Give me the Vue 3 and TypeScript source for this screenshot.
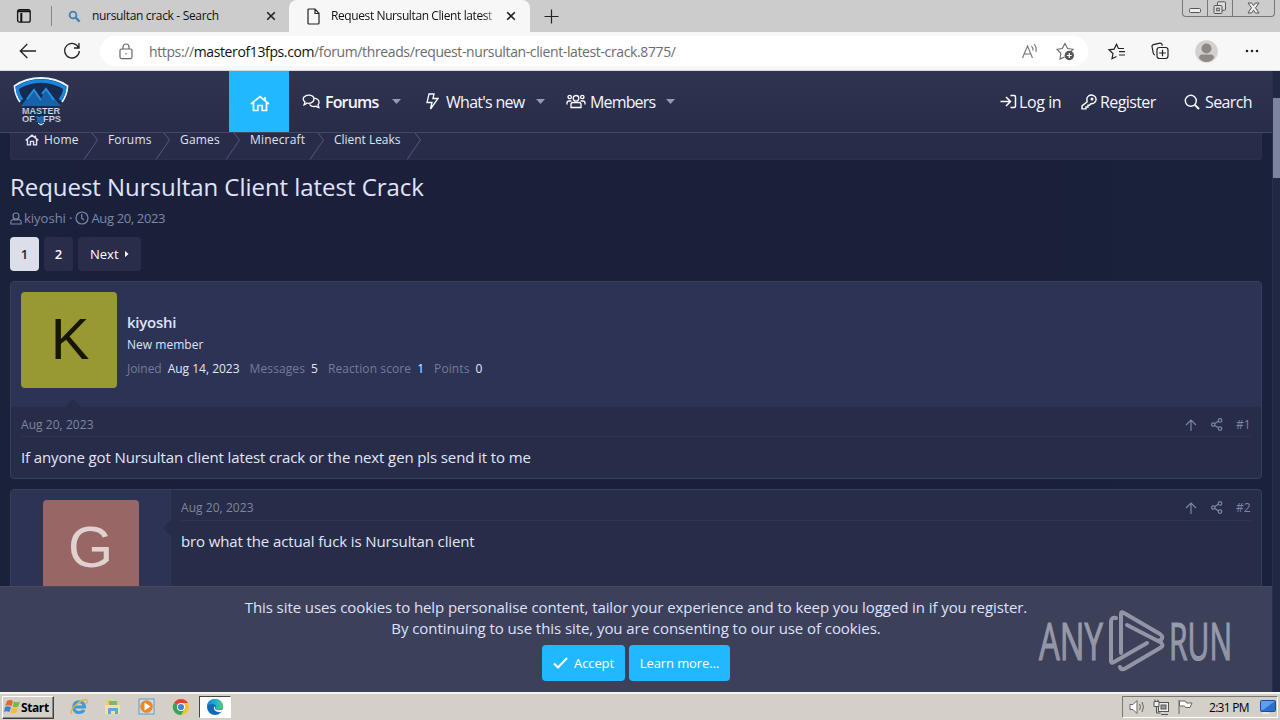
<script setup lang="ts">
interface Stat { label: string; value: string }
const crumbs: string[] = ['Home', 'Forums', 'Games', 'Minecraft', 'Client Leaks']
const stats: Stat[] = [
  { label: 'Joined', value: 'Aug 14, 2023' },
  { label: 'Messages', value: '5' },
  { label: 'Reaction score', value: '1' },
  { label: 'Points', value: '0' },
]
</script>

<template>
  <div class="screen">
    <header class="tabs">
      <div class="tab-menu">
        <svg width="16" height="16" viewBox="0 0 16 16" fill="none" stroke="#111" stroke-width="1.3"><rect x="1.6" y="1.6" width="12.6" height="12.6" rx="2" /><path d="M2 3.2h12M5.3 5v9" stroke-width="2" /></svg>
      </div>
      <div class="tab idle">
        <svg width="13" height="13" viewBox="0 0 13 13" fill="none" stroke="#3f7fbd"><circle cx="5" cy="5" r="3.4" stroke-width="1.8" /><path d="M7.6 7.6l4 4" stroke-width="2.3" /></svg>
        <span class="tab-text one">nursultan crack - Search</span>
        <svg class="close" width="10" height="10" viewBox="0 0 10 10" stroke="#222" stroke-width="1.6"><path d="M1.2 1.2l7.6 7.6M8.8 1.2L1.2 8.8" /></svg>
      </div>
      <div class="tab active">
        <svg width="13" height="17" viewBox="0 0 13 17" fill="none" stroke="#222" stroke-width="1.2"><path d="M2 1h6l4 4.3V15q0 1-1 1H2q-1 0-1-1V2q0-1 1-1zM8 1v4.5h4" /></svg>
        <span class="tab-text two">Request Nursultan Client latest</span>
        <svg class="close" width="10" height="10" viewBox="0 0 10 10" stroke="#222" stroke-width="1.6"><path d="M1.2 1.2l7.6 7.6M8.8 1.2L1.2 8.8" /></svg>
      </div>
      <svg class="plus" width="15" height="15" viewBox="0 0 15 15" stroke="#222" stroke-width="1.2"><path d="M7.5 .5v14M.5 7.5h14" /></svg>
      <div class="win-buttons">
        <span class="wb"><svg width="14" height="7" viewBox="0 0 14 7" fill="#eee" stroke="#555"><rect x="1.5" y="1.5" width="11" height="4" rx="1" /></svg></span>
        <span class="wb"><svg width="14" height="14" viewBox="0 0 14 14" fill="#ddd" stroke="#555"><rect x="4.5" y=".8" width="8" height="8.5" rx="1" /><rect x="1" y="4.5" width="8" height="8" rx="1" /><rect x="3.7" y="7.2" width="2.6" height="2.6" /></svg></span>
        <span class="wb wide"><svg width="13" height="12" viewBox="0 0 13 12" fill="#eee" stroke="#555"><path d="M1 1h3.600l1.900 2.600L8.400 1H12L8.500 5.800 12 11H8.400L6.500 8.200 4.600 11H1l3.500-5.200z" /></svg></span>
      </div>
    </header>

    <div class="toolbar">
      <svg class="back" width="18" height="16" viewBox="0 0 18 16" fill="none" stroke="#222" stroke-width="1.3"><path d="M17 8H1.500M8.300 1L1.300 8l7 7" /></svg>
      <svg class="reload" width="18" height="18" viewBox="0 0 18 18" fill="none" stroke="#222" stroke-width="1.3"><path d="M15.800 6A7.300 7.300 0 1 0 16.300 9M16 1v5h-5" /></svg>
      <div class="address">
        <svg class="lock" width="14" height="17" viewBox="0 0 14 17" fill="none" stroke="#666" stroke-width="1.2"><rect x="1" y="6" width="12" height="9.600" rx="1.500" /><path d="M4 6V4a3 3 0 0 1 6 0v2" /><circle cx="7" cy="10.800" r=".8" fill="#666" stroke="none" /></svg>
        <span class="url">https://<b>masterof13fps.com</b>/forum/threads/request-nursultan-client-latest-crack.8775/</span>
        <svg class="read" width="18" height="17" viewBox="0 0 18 17" fill="none" stroke="#777" stroke-width="1.15"><path d="M1.500 15L6.500 3l5 12M3.200 11h6.600M10.500 3.200q2 2 1.400 4.500M13 1.200q3.200 3 1.800 7.600" /></svg>
        <svg class="favadd" width="19" height="19" viewBox="0 0 19 19" fill="none" stroke="#666" stroke-width="1.1"><path d="M8.500 15L4 17l.8-5.700L1 7.300l5.300-.8L9 1.500l2.500 5 5.500.8-2.500 2.500" /><circle cx="13.300" cy="13.500" r="4.700" fill="#555" stroke="none" /><path d="M13.300 11v5M10.800 13.500h5" stroke="#fff" stroke-width="1.2" /></svg>
      </div>
      <svg class="favs" width="18" height="17" viewBox="0 0 18 17" fill="none" stroke="#222" stroke-width="1.2"><path d="M8.500 13.500L4 15.700l1-5.200L1 6.800l5.100-.7L8.500 1.300l2 4.200H16M11 8.700h6M11 12h6" /></svg>
      <svg class="collections" width="18" height="18" viewBox="0 0 18 18" fill="none" stroke="#222" stroke-width="1.2"><path d="M4 13Q2.500 12.500 2.200 11L1 4.500Q.8 3 2.300 2.600L9 1.200q1.500-.2 2 1.300l.4 1.300" /><rect x="6" y="5.500" width="11" height="11" rx="2.400" /><path d="M11.500 7.700v6.600M8.200 11h6.600" /></svg>
      <svg class="avatar-icon" width="23" height="23" viewBox="0 0 23 23"><circle cx="11.500" cy="11.500" r="11.300" fill="#d3d0cd" /><circle cx="11.500" cy="8.500" r="5" fill="#8e8984" /><path d="M4 18q0-3.500 3-3.500h9q3 0 3 3.500-3 4-7.500 4T4 18z" fill="#8e8984" /></svg>
      <svg class="more" width="14" height="4" viewBox="0 0 14 4" fill="#222"><circle cx="2" cy="2" r="1.300" /><circle cx="7" cy="2" r="1.300" /><circle cx="12" cy="2" r="1.300" /></svg>
    </div>

    <div class="viewport">
      <main class="site">
        <nav class="nav">
          <svg class="logo" width="56" height="50" viewBox="0 0 56 50">
            <path d="M28 1Q43 1 54.500 9 54 19 48 26L28 48 8 26Q2 19 1.500 9 13 1 28 1z" fill="#172a52" />
            <path d="M7 25Q2 18 1.500 9 13 1 28 1T54.500 9Q54 18 49 25" fill="none" stroke="#e8f4ff" stroke-width="1.800" />
            <path d="M9 23Q4.500 17 4.300 11 15 4 28 4t23.700 7Q51.500 17 47 23" fill="none" stroke="#1686df" stroke-width="3.300" />
            <path d="M8 29L21 12l7 10 5-11 7 9 8 9z" fill="#1763a8" /><path d="M14 22l7-9 7 10M29 17l4-5 8 11" fill="none" stroke="#268ee0" stroke-width="2" />
            <path d="M23 40h10l-5 8z" fill="#1479c9" /><path d="M25 46l3 2 3-2" stroke="#fff" fill="none" />
            <text x="9" y="37" textLength="38" lengthAdjust="spacingAndGlyphs">MASTER</text>
            <text x="9" y="44.500" textLength="13" lengthAdjust="spacingAndGlyphs">OF</text><text x="30" y="44.500" textLength="18" lengthAdjust="spacingAndGlyphs">FPS</text>
            <text class="thirteen" x="22.500" y="44.500" textLength="8" lengthAdjust="spacingAndGlyphs">13</text>
          </svg>
          <a class="nav-home"><svg width="20" height="17" viewBox="0 0 20 17" fill="none" stroke="#fff" stroke-width="1.700"><path d="M1 9L10 1.500 19 9M3.500 7.500V15.500h4.300v-5h4.400v5h4.300V7.500M15 5V2" /></svg></a>
          <a class="nav-item forums"><svg width="18" height="15" viewBox="0 0 18 15" fill="none" stroke="#fff" stroke-width="1.300"><path d="M2 11l1-3Q0 5.500 2 3q2.500-2.500 6-1.800 4 .8 4 4Q11.500 9 7 9.300q-1.200 0-2-.3-1.500 1.500-3 2zM12.500 4.200Q17 5 17 8.500q0 1.500-1 2.500l1 2.700q-2-.2-3-1.500-4 1.500-6.500-1.800" /></svg><span>Forums</span><i class="caret" /></a>
          <a class="nav-item whats"><svg width="14" height="17" viewBox="0 0 14 17" fill="none" stroke="#fff" stroke-width="1.300"><path d="M4 1h5L8 5.500h5L5.500 16 7 9.500H2z" /></svg><span>What's new</span><i class="caret" /></a>
          <a class="nav-item members"><svg width="20" height="15" viewBox="0 0 20 15" fill="none" stroke="#fff" stroke-width="1.300"><circle cx="10" cy="4.300" r="2.800" /><circle cx="3.700" cy="3" r="1.700" /><circle cx="16.300" cy="3" r="1.700" /><path d="M5 13.500v-3Q5 8.500 7 8.500h6q2 0 2 2v3zM5.500 7H3Q1 7 1 9v1.500M14.500 7H17q2 0 2 2v1.500" /></svg><span>Members</span><i class="caret" /></a>
          <div class="nav-right">
            <a class="login"><svg width="17" height="15" viewBox="0 0 17 15" fill="none" stroke="#fff" stroke-width="1.500"><path d="M.5 7.500H10M6 3l4.500 4.500L6 12M10.500 1.500H14q1.500 0 1.500 1.500v9q0 1.500-1.500 1.500h-3.500" /></svg><span>Log in</span></a>
            <a class="register"><svg width="16" height="16" viewBox="0 0 16 16" fill="none" stroke="#fff" stroke-width="1.400"><path d="M6.200 7.700Q5 4 7.500 2 10 .200 13 1.800q2.800 2 1.800 5-1.200 3.200-5 3L8.500 11.300H7V13H5v1.900H1v-3z" /><circle cx="11" cy="5" r=".8" /></svg><span>Register</span></a>
            <a class="search"><svg width="16" height="16" viewBox="0 0 16 16" fill="none" stroke="#fff"><circle cx="6.800" cy="6.800" r="5.500" stroke-width="1.400" /><path d="M11 11l4 4" stroke-width="2" /></svg><span>Search</span></a>
          </div>
        </nav>

        <div class="crumbs">
          <div v-for="(c, i) in crumbs" :key="c" class="crumb" :class="'c' + i">
            <svg v-if="i === 0" class="mini-home" width="14" height="12" viewBox="0 0 20 17" fill="none" stroke="#e0e3f5" stroke-width="2"><path d="M1 9L10 1.500 19 9M3.500 7.500V15.500h4.300v-5h4.400v5h4.300V7.500M15 5V2" /></svg>
            <span>{{ c }}</span>
            <svg class="chevron" width="16" height="27" viewBox="0 0 16 27" fill="none" stroke="#53597a" stroke-width="1"><path d="M8 0l5.500 7L0 26.500" /></svg>
          </div>
        </div>

        <h1>Request Nursultan Client latest Crack</h1>
        <div class="meta">
          <svg width="12" height="13" viewBox="0 0 12 13" fill="none" stroke="currentColor" stroke-width="1.100"><circle cx="6" cy="4" r="3" /><path d="M3.300 7.200Q1 8 .8 10v2h10.400v-2Q11 8 8.700 7.200q-2.700 1.700-5.400 0z" /></svg>
          <span class="by">kiyoshi</span><span class="dot">·</span>
          <svg width="14" height="14" viewBox="0 0 14 14" fill="none" stroke="currentColor" stroke-width="1.200"><circle cx="7" cy="7" r="6" /><path d="M6.800 3v4.500l2.200 1.600" /></svg>
          <span class="on">Aug 20, 2023</span>
        </div>
        <div class="pages"><a class="page current">1</a><a class="page">2</a><a class="page next">Next<i /></a></div>

        <article class="post first">
          <div class="user">
            <div class="avatar k">K</div>
            <div class="user-info">
              <strong>kiyoshi</strong>
              <span class="role">New member</span>
              <div class="stats"><span v-for="s in stats" :key="s.label" class="stat"><span class="label">{{ s.label }}</span><span class="value">{{ s.value }}</span></span></div>
            </div>
            <i class="notch" />
          </div>
          <div class="content">
            <div class="post-head"><span>Aug 20, 2023</span>
              <svg class="up" width="12" height="12" viewBox="0 0 12 12" fill="none" stroke="currentColor" stroke-width="1.200"><path d="M6 12V1M1 6l5-5 5 5" /></svg>
              <svg class="share" width="12" height="13" viewBox="0 0 12 13" fill="none" stroke="currentColor" stroke-width="1.200"><circle cx="2.300" cy="6.500" r="1.700" /><circle cx="9" cy="2.400" r="1.800" /><circle cx="9" cy="10.600" r="1.800" /><path d="M3.800 5.500L7.400 3.300M3.800 7.500l3.600 2.200" /></svg>
              <span class="num">#1</span></div>
            <p class="message m1">If anyone got Nursultan client latest crack or the next gen pls send it to me</p>
          </div>
        </article>

        <article class="post second">
          <div class="user"><div class="avatar g">G</div><i class="notch" /></div>
          <div class="content">
            <div class="post-head"><span>Aug 20, 2023</span>
              <svg class="up" width="12" height="12" viewBox="0 0 12 12" fill="none" stroke="currentColor" stroke-width="1.200"><path d="M6 12V1M1 6l5-5 5 5" /></svg>
              <svg class="share" width="12" height="13" viewBox="0 0 12 13" fill="none" stroke="currentColor" stroke-width="1.200"><circle cx="2.300" cy="6.500" r="1.700" /><circle cx="9" cy="2.400" r="1.800" /><circle cx="9" cy="10.600" r="1.800" /><path d="M3.800 5.500L7.400 3.300M3.800 7.500l3.600 2.200" /></svg>
              <span class="num">#2</span></div>
            <p class="message m2">bro what the actual fuck is Nursultan client</p>
          </div>
        </article>
      </main>
      <div class="scroll"><div class="thumb" /></div>

      <section class="cookies">
        <p class="line1">This site uses cookies to help personalise content, tailor your experience and to keep you logged in if you register.</p>
        <p class="line2">By continuing to use this site, you are consenting to our use of cookies.</p>
        <div class="buttons">
          <button class="accept"><svg width="15" height="12" viewBox="0 0 15 12" fill="none" stroke="#fff" stroke-width="2"><path d="M1 6.500L5 10.500 14 1" /></svg><span>Accept</span></button>
          <button class="learn">Learn more…</button>
        </div>
        <svg class="watermark" width="200" height="84" viewBox="0 -10 200 84">
          <defs><linearGradient id="mark" x1="0" y1="0" x2="0" y2="1"><stop offset="0" stop-color="#a0a3b1" /><stop offset="1" stop-color="#888c9f" /></linearGradient></defs>
          <text x="2" y="51" textLength="64" lengthAdjust="spacingAndGlyphs">ANY</text>
          <text x="132" y="51" textLength="63" lengthAdjust="spacingAndGlyphs">RUN</text>
          <g fill="none" stroke="#9295a6" stroke-width="4" stroke-linejoin="round" stroke-linecap="round"><path d="M79 9q-5-1-5 4v39q0 3 3 1l33-19" /><path d="M84 44V5q0-3 3-1l36 21q4 3 1 6l-3 1L90 16" /><path d="M83 58q1 4 6 1l34-20q5-3 0-6" /></g>
        </svg>
      </section>
    </div>

    <footer class="taskbar">
      <button class="start">
        <svg width="17" height="16" viewBox="0 0 17 16"><path d="M3 2q3-2 6 0L7.500 7.200q-3-1.800-6.200-.4z" fill="#e3682b" /><path d="M10 2.500q3 1.500 6 0l-1.700 5q-3 1.500-5.700-.1z" fill="#79b648" /><path d="M1 8q3-1.400 6 .2L5.400 13q-3-1.600-5.400 0z" fill="#437fc1" /><path d="M8 8.500q3 1.600 6 .1l-1.600 5q-3 1.500-6-.2z" fill="#f2bd31" /></svg>
        <span>Start</span>
      </button>
      <svg class="ie" width="18" height="18" viewBox="0 0 18 18" fill="none"><path d="M4 9h10.500Q14 3.700 9 3.700T3.600 9.300Q4 14.500 9 14.500q3.500 0 5-2.500" stroke="#3d9bd8" stroke-width="3" /><path d="M1.500 16Q-.5 12 7 6t9.600-4q1.400 1-.4 4" stroke="#e0b638" stroke-width="1.500" /></svg>
      <svg class="folder" width="18" height="18" viewBox="0 0 18 18"><path d="M2 2h5l1 2h7v10H2z" fill="#e9cd70" /><path d="M5 3h8v5H5z" fill="#77b96d" /><path d="M1 7h15v9H1z" fill="#f4e396" /><path d="M4 16v-5q0-1 1-1h8q1 0 1 1v5h-3v-3H7v3z" fill="#62a7d3" /></svg>
      <svg class="player" width="18" height="18" viewBox="0 0 18 18"><rect x="1" y="1" width="15" height="15" fill="#c8dff2" stroke="#6796c6" /><circle cx="8.500" cy="8.500" r="6.300" fill="#ef871d" /><path d="M6.500 4.500l6 4-6 4z" fill="#fff" /></svg>
      <svg class="chrome" width="18" height="18" viewBox="0 0 18 18"><circle cx="9" cy="9" r="8" fill="#f3c52c" /><path d="M9 9L2 5Q4.500 1 9 1t7 4H9z" fill="#e04435" /><path d="M9 9L2 5Q-1 10 3 14.500 5.500 17 9 17l3.500-6z" fill="#38a35a" /><circle cx="9" cy="9" r="4" fill="#fff" /><circle cx="9" cy="9" r="3.100" fill="#4285d5" /></svg>
      <div class="edge-slot"><svg width="18" height="18" viewBox="0 0 18 18"><defs><linearGradient id="edge-top"><stop stop-color="#1686d2" /><stop offset=".6" stop-color="#25b5cc" /><stop offset="1" stop-color="#62cc59" /></linearGradient></defs><circle cx="9" cy="9" r="8" fill="#1268b3" /><path d="M1 8Q2 1 9 1t8 7q0 4-5 4-3 0-2.300-2Q11 6 6 6 2.500 6 1 8z" fill="url(#edge-top)" /><path d="M8 8.500q-.5 4.500 4 5.500 3 .5 4-.8L18 10q-1.500 2.500-5.500 2.300Q8 12 9.200 9z" fill="#fff" /></svg></div>
      <div class="tray">
        <svg class="sound" width="17" height="16" viewBox="0 0 17 16" fill="#fff" stroke="#666"><path d="M1 5.500h3l4-4v13l-4-4H1z" /><path d="M10.500 5q2 3 0 6M13 3q3 5 0 10" fill="none" /></svg>
        <svg class="net" width="17" height="17" viewBox="0 0 17 17" fill="#eee" stroke="#555"><rect x="5.500" y="3.500" width="10" height="9" /><rect x="8" y="6" width="5" height="4" fill="#999" /><path d="M8 15.500h7M3.500 7v7h4" fill="none" /><path d="M1 2.500h5v5H1zM2 .5v2M5 .5v2" /></svg>
        <svg class="flag" width="17" height="16" viewBox="0 0 17 16" fill="#fff" stroke="#666"><path d="M2 15V1M2.500 2h6l1 2H15l-2 4.500H8.500L7.500 7h-5z" /></svg>
        <span class="time">2:31 PM</span>
        <svg class="desktop" width="16" height="14" viewBox="0 0 16 14"><rect x=".5" y=".5" width="15" height="11" rx="1" fill="#2a6ed0" stroke="#1c4e9b" /><path d="M1 1h14L3 10H1z" fill="#5f9ee8" /><path d="M2 13h7" stroke="#fff" /></svg>
      </div>
    </footer>
  </div>
</template>

<style>
html, body { margin: 0; overflow: hidden; background: #1a1f39; }
</style>
<style scoped>
* { box-sizing: border-box; }
svg { display: block; flex: none; }
.screen { width: 1280px; height: 720px; overflow: hidden; display: flex; flex-direction: column; font-family: "Open Sans", "Noto Sans", sans-serif; color: #dfe3f8; white-space: nowrap; }
.tabs { height: 32px; background: #ccc; display: flex; align-items: center; flex: none; }
.tab-menu { width: 52px; height: 20px; padding: 2px 0 0 16px; border-right: 1px solid #888; }
.tab { height: 32px; display: flex; align-items: center; color: #111; }
.idle { width: 237px; padding-left: 16px; }
.active { width: 241px; background: #f7f7f7; border-radius: 8px 8px 0 0; padding-left: 18px; }
.tab-text { font-size: 12px; line-height: 18px; letter-spacing: -.33px; }
.one { width: 160px; margin-left: 11px; }
.idle .close { margin-left: 14px; }
.two { width: 163px; margin-left: 11px; letter-spacing: -.4px; mask-image: linear-gradient(90deg, #000 94%, rgba(0, 0, 0, .3)); }
.active .close { margin-left: 12px; }
.plus { margin-left: 14px; }
.win-buttons { margin: 0 5px 0 auto; align-self: flex-start; height: 17px; width: 93px; display: flex; border: 1px solid #777; border-top: 0; border-radius: 0 0 4px 4px; }
.wb { width: 25px; display: flex; align-items: center; justify-content: center; border-right: 1px solid #777; }
.wb:first-child { padding-top: 4px; }
.wide { width: 41px; border: 0; }
.toolbar { height: 39px; flex: none; display: flex; align-items: center; background: #f7f7f7; border-bottom: 1px solid #d7dae2; }
.back { margin-left: 19px; }
.reload { margin-left: 26px; }
.address { width: 988px; height: 30px; margin-left: 19px; border-radius: 15px; background: #fff; display: flex; align-items: center; }
.lock { margin-left: 19px; }
.url { margin-left: 16px; width: 870px; font-size: 14px; color: #6c6c6c; letter-spacing: -.38px; }
.url b { font-weight: 400; color: #111; }
.read { margin-left: 2px; }
.favadd { margin-left: 17px; }
.favs { margin-left: 20px; }
.collections { margin-left: 25px; }
.avatar-icon { margin-left: 26px; }
.more { margin-left: 27px; }
.viewport { height: 621px; flex: none; position: relative; display: flex; }
.site { width: 1272px; overflow: hidden; background: linear-gradient(90deg, #1a213b, #1c1f39 25%, #1b2039 75%, #19213b); }
.nav { height: 62px; display: flex; background: linear-gradient(#303450, #272c48); border-bottom: 1px solid #414864; }
.logo { margin: 6px 0 0 13px; width: 56px; }
.logo text { font-family: "Liberation Sans", sans-serif; font-weight: 700; font-size: 8.500px; fill: #dce3ef; stroke: #36405d; stroke-width: .2px; }
.logo .thirteen { fill: #1374b9; }
.nav-home { width: 60px; height: 61px; margin-left: 160px; background: #22b8ff; display: flex; align-items: center; justify-content: center; padding: 3px 0 0 1px; }
.nav-item { height: 61px; display: flex; align-items: center; color: #f5f5ff; font-size: 16px; }
.caret { width: 9px; height: 5px; background: #9799b5; clip-path: polygon(0 0, 100% 0, 50% 100%); }
.forums { margin-left: 13px; font-weight: 600; }
.forums span { width: 54px; margin-left: 5px; letter-spacing: -.85px; }
.forums .caret { margin-left: 13px; }
.whats { margin-left: 24px; }
.whats span { width: 80px; margin-left: 7px; letter-spacing: -.72px; }
.whats .caret { margin-left: 10px; }
.members { margin-left: 21px; }
.members span { width: 66px; margin-left: 4px; letter-spacing: -.85px; }
.members .caret { margin-left: 10px; }
.nav-right { margin-left: auto; display: flex; align-items: center; font-size: 16px; color: #f5f5ff; padding-right: 20px; }
.nav-right a { display: flex; align-items: center; gap: 3px; letter-spacing: -.6px; }
.nav-right .login { width: 81px; gap: 2px; letter-spacing: -.4px; }
.register { width: 103px; }
.search { width: 68px; }
.nav-right .search { gap: 5px; }
.crumbs { height: 27px; margin: 0 10px; display: flex; background: #292c48; border: 1px solid #2d304c; border-top: 0; font-size: 12px; color: #dfe3f8; border-radius: 0 0 3px 3px; }
.crumb { display: flex; align-items: flex-start; line-height: 14px; letter-spacing: .18px; }
.crumb .chevron { margin-left: auto; }
.mini-home { margin: 1px 5px 0 14px; }
.c0 { width: 89px; }
.c1 { width: 72px; padding-left: 8px; }
.c2 { width: 70px; padding-left: 8px; }
.c3 { width: 84px; padding-left: 8px; }
.c4 { width: 97px; padding-left: 8px; font-weight: 500; letter-spacing: -.03px; }
h1 { font-size: 24px; line-height: 32px; font-weight: 400; margin: 11px 0 0 10px; height: 36px; letter-spacing: -.04px; color: #e0e4fa; }
.meta { height: 20px; margin: 1px 0 0 10px; display: flex; align-items: center; font-size: 13px; color: #8087a6; }
.by { width: 42px; margin-left: 2px; }
.dot { margin: 0 3px 0 3px; }
.on { margin-left: 2px; letter-spacing: -.35px; }
.pages { display: flex; gap: 5px; margin: 9px 0 0 10px; height: 34px; }
.page { width: 29px; height: 34px; background: #292d49; border-radius: 4px; font-size: 13px; line-height: 34px; text-align: center; color: #fff; font-weight: 600; }
.current { background: #dcdeea; color: #20233a; }
.next { width: 63px; font-weight: 400; display: flex; align-items: center; padding-left: 12px; }
.next i { width: 4px; height: 7px; margin-left: 6px; background: #fff; clip-path: polygon(0 0, 100% 50%, 0 100%); }
.post { margin: 10px 10px 0; border: 1px solid #373f5e; border-radius: 4px; overflow: hidden; background: #272c48; }
.user { background: #2c3354; position: relative; }
.first { height: 198px; }
.first .user { height: 125px; padding: 10px; display: flex; }
.avatar { width: 96px; height: 96px; border-radius: 4px; display: flex; align-items: center; justify-content: center; font-family: "Liberation Sans", sans-serif; font-size: 58px; line-height: 94px; padding-bottom: 2px; }
.k { background: #999933; color: #171503; padding-left: 2px; }
.g { background: #996666; color: #e2d1d1; padding-right: 1px; }
.user-info { margin-left: 10px; padding-top: 19px; display: flex; flex-direction: column; }
.user-info strong { font-size: 15px; line-height: 22px; font-weight: 600; letter-spacing: -.25px; }
.role { font-size: 12px; line-height: 22px; letter-spacing: .03px; margin-top: 1px; }
.stats { display: flex; font-size: 12px; line-height: 26px; }
.stat { margin-right: 10px; display: flex; gap: 6px; }
.label { color: #737b9c; letter-spacing: .1px; }
.stat:first-child .label { letter-spacing: -.05px; }
.value { color: #e3e6fa; }
.notch { position: absolute; background: #272c48; }
.first .notch { left: 54px; bottom: 0; width: 16px; height: 8px; clip-path: polygon(0 100%, 50% 0, 100% 100%); }
.first .content, .second .content { padding: 0 10px; }
.post-head { display: flex; align-items: center; height: 30px; padding-top: 6px; font-size: 12px; color: #7e86a4; border-bottom: 1px solid #30344f; letter-spacing: .05px; }
.up { margin-left: auto; }
.share { margin-left: 14px; }
.num { width: 15px; margin-left: 13px; }
.message { font-size: 15px; line-height: 21px; margin: 10px 0 0; color: #e2e6fb; letter-spacing: -.12px; }
.second { display: flex; height: 210px; }
.second .user { width: 160px; height: 210px; padding: 10px 0 0 32px; border-right: 1px solid #313857; }
.second .notch { right: -1px; top: 30px; width: 8px; height: 16px; clip-path: polygon(100% 0, 0 50%, 100% 100%); }
.second .content { flex: 1; }
.second .post-head { height: 31px; padding-top: 5px; }
.scroll { width: 8px; background: #202844; border-left: 1px solid #29304b; padding-top: 27px; }
.thumb { height: 80px; background: #7e849f; }
.cookies { position: absolute; left: 0; bottom: 0; width: 1272px; height: 106px; background: #3c4059; border-top: 1px solid #454962; padding-top: 10px; display: flex; flex-direction: column; align-items: center; font-size: 15px; color: #dfe1ff; letter-spacing: -.085px; }
.cookies p { margin: 0; line-height: 21px; }
.line2 { letter-spacing: -.07px; }
.buttons { display: flex; gap: 4px; margin-top: 6px; }
button { font-family: inherit; }
.buttons button { height: 36px; border: 0; border-radius: 4px; background: #22b8ff; color: #fff; font-size: 13px; padding: 0; display: flex; align-items: center; justify-content: center; letter-spacing: -.1px; }
.accept { width: 83px; gap: 6px; }
.learn { width: 101px; }
.watermark { position: absolute; left: 1037px; top: 12px; }
.watermark text { font-family: "Open Sans", sans-serif; font-weight: 400; font-size: 52px; fill: url(#mark); stroke: #979aaa; stroke-width: 1.2px; letter-spacing: 0; }
.taskbar { height: 28px; flex: none; display: flex; align-items: center; background: #d4d0c8; border-top: 2px solid #f5f4ef; }
.start { width: 52px; height: 23px; margin-left: 2px; padding: 0; background: #d4d0c8; border: 1px solid; border-color: #fff #404040 #404040 #fff; box-shadow: inset -1px -1px #888; display: flex; align-items: center; font-weight: 700; font-size: 12px; letter-spacing: -.4px; color: #000; }
.start svg { margin-left: 1px; }
.ie { margin-left: 16px; }
.folder { margin-left: 16px; }
.player { margin-left: 16px; }
.chrome { margin-left: 16px; }
.edge-slot { width: 32px; height: 22px; margin-left: 9px; display: flex; align-items: center; justify-content: center; background: #fff; border: 1px solid; border-color: #444 #fff #fff #444; }
.tray { width: 156px; height: 22px; margin: 0 2px 0 auto; border: 1px solid; border-color: #777 #fff #fff #777; display: flex; align-items: center; color: #000; }
.sound { margin-left: 6px; }
.net { margin-left: 7px; }
.flag { margin-left: 7px; }
.time { width: 40px; margin-left: 15px; font-size: 12px; letter-spacing: -.7px; }
.desktop { margin-left: 11px; }
</style>
